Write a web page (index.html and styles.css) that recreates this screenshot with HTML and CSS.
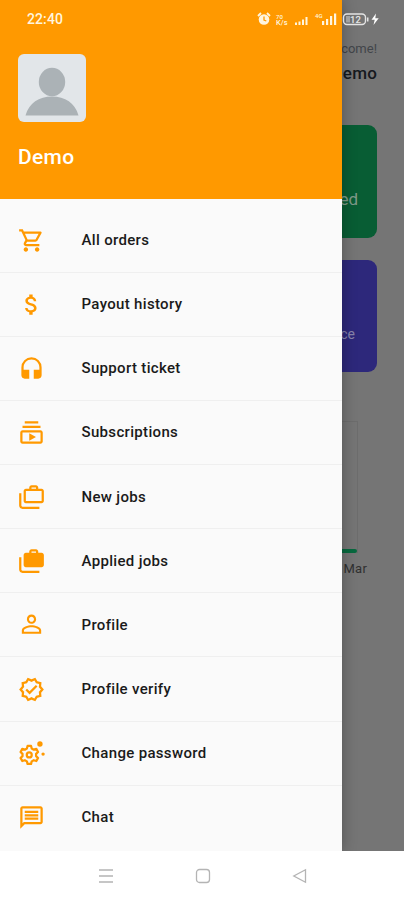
FILE: index.html
```
<!DOCTYPE html>
<html lang="en">
<head>
<meta charset="utf-8">
<meta name="viewport" content="width=device-width, initial-scale=1">
<title>Demo</title>
<link rel="stylesheet" href="styles.css">
</head>
<body>
<div class="phone">
  <main class="dashboard">
    <div class="greeting"><span class="welcome">Welcome!</span><strong class="username">Demo</strong></div>
    <section class="card card-green"><span>Completed</span></section>
    <section class="card card-blue"><span>Balance</span></section>
    <section class="chart"><div class="plot"><i class="bar"></i></div><span class="month">Mar</span></section>
  </main>

  <aside class="drawer">
    <header class="drawer-head">
      <svg class="avatar" viewBox="0 0 68 68"><rect width="68" height="68" rx="6" fill="#e2e6e9"/><ellipse cx="34" cy="28" rx="13.2" ry="14.3" fill="#abb2b6"/><path d="M7.500 61.500C11 49 21 42.500 34 42.500S57 49 60.500 61.500Z" fill="#abb2b6"/></svg>
      <h1>Demo</h1>
    </header>
    <nav class="menu">
      <a class="item"><svg viewBox="0 0 24 24"><path d="M15.550 13c.75 0 1.410-.41 1.750-1.030l3.580-6.490A.996.996 0 0 0 20.010 4H5.210l-.94-2H1v2h2l3.600 7.590-1.350 2.440C4.520 15.370 5.480 17 7 17h12v-2H7l1.100-2h7.450zM6.160 6h12.150l-2.760 5H8.530L6.160 6zM7 18c-1.100 0-1.990.9-1.990 2S5.900 22 7 22s2-.9 2-2-.9-2-2-2zm10 0c-1.100 0-1.990.9-1.990 2s.89 2 1.990 2 2-.9 2-2-.9-2-2-2z"/></svg><span>All orders</span></a>
      <a class="item"><svg viewBox="0 0 24 24"><path d="M11.800 10.900c-2.270-.59-3-1.200-3-2.150 0-1.090 1.010-1.850 2.700-1.850 1.780 0 2.440.85 2.500 2.100h2.210c-.07-1.720-1.120-3.300-3.210-3.810V3h-3v2.160c-1.940.42-3.500 1.680-3.500 3.610 0 2.310 1.910 3.460 4.700 4.130 2.500.6 3 1.480 3 2.410 0 .69-.49 1.790-2.700 1.790-2.060 0-2.870-.92-2.980-2.100h-2.200c.12 2.190 1.760 3.420 3.680 3.830V21h3v-2.150c1.950-.37 3.500-1.500 3.500-3.550 0-2.840-2.430-3.810-4.700-4.400z"/></svg><span>Payout history</span></a>
      <a class="item"><svg viewBox="0 0 24 24"><path d="M12 2a9 9 0 0 0-9 9v7c0 1.660 1.340 3 3 3h4v-8H5v-2c0-3.870 3.130-7 7-7s7 3.130 7 7v2h-5v8h4c1.660 0 3-1.340 3-3v-7a9 9 0 0 0-9-9z"/></svg><span>Support ticket</span></a>
      <a class="item"><svg viewBox="0 0 24 24"><path d="M4 6h16v2H4zm2-4h12v2H6zm14 8H4c-1.100 0-2 .9-2 2v8c0 1.100.9 2 2 2h16c1.100 0 2-.9 2-2v-8c0-1.100-.9-2-2-2zm0 10H4v-8h16v8zm-10-7.270v6.530L16 16z"/></svg><span>Subscriptions</span></a>
      <a class="item"><svg viewBox="0 0 24 24"><path d="M1 9h2v11c0 .55.45 1 1 1h15v2H4c-1.660 0-3-1.340-3-3V9zM18 5V4c0-1.100-.9-2-2-2h-4c-1.100 0-2 .9-2 2v1H7c-1.100 0-2 .9-2 2v9c0 1.100.9 2 2 2h14c1.100 0 2-.9 2-2V7c0-1.100-.9-2-2-2h-3zm-6-1h4v1h-4V4zm9 12H7V7h14v9z"/></svg><span>New jobs</span></a>
      <a class="item"><svg viewBox="0 0 24 24"><path d="M1 9h2v11c0 .55.45 1 1 1h15v2H4c-1.660 0-3-1.340-3-3V9zM18 5V4c0-1.100-.9-2-2-2h-4c-1.100 0-2 .9-2 2v1H7c-1.100 0-2 .9-2 2v9c0 1.100.9 2 2 2h14c1.100 0 2-.9 2-2V7c0-1.100-.9-2-2-2h-3zm-6-1h4v1h-4V4z"/></svg><span>Applied jobs</span></a>
      <a class="item"><svg viewBox="0 0 24 24"><path d="M12 5c1.160 0 2.200 1 2.200 2.300S13.200 9.600 12 9.600 9.800 8.600 9.800 7.300 10.840 5 12 5m0 9.500c2.970 0 6.700 1.460 6.700 2.700v1.200H5.300v-1.200c0-1.240 3.730-2.700 6.700-2.700M12 3.200c-2.300 0-4.100 1.800-4.100 4.100s1.800 4.100 4.100 4.100 4.100-1.800 4.100-4.100-1.800-4.100-4.100-4.100zm0 9.500c-2.900 0-8.600 1.500-8.600 4.500v3h17.200v-3c0-3-5.700-4.500-8.600-4.500z"/></svg><span>Profile</span></a>
      <a class="item"><svg viewBox="0 0 24 24"><path d="M23 12l-2.440-2.790.34-3.690-3.610-.82L15.400 1.500 12 2.960 8.600 1.500 6.710 4.690 3.100 5.500l.34 3.700L1 12l2.440 2.790-.34 3.700 3.610.82L8.600 22.500 12 21.040l3.400 1.460 1.890-3.190 3.610-.82-.34-3.690L23 12zm-4.510 2.110.26 2.790-2.740.62-1.430 2.410L12 18.750l-2.580 1.180-1.430-2.410-2.740-.62.26-2.800L3.660 12l1.850-2.120-.26-2.780 2.740-.61 1.430-2.410L12 5.250l2.580-1.180 1.430 2.410 2.740.62-.26 2.790L20.340 12z"/><path d="m7.300 12 3 3 6.300-6.300" fill="none" stroke="currentColor" stroke-width="2"/></svg><span>Profile verify</span></a>
      <a class="item"><svg viewBox="0 0 24 24"><g fill="none" stroke="currentColor"><path stroke-width="2" stroke-linejoin="round" d="m8.500 5.300 3.100 0 .6 2.300 1.800 1 2.300-.7 1.500 2.700-1.700 1.700v2l1.700 1.700-1.500 2.700-2.300-.7-1.800 1-.6 2.300h-3.100l-.6-2.300-1.800-1-2.300.7L2.300 16l1.700-1.700v-2l-1.700-1.700 1.500-2.700 2.300.7 1.800-1z"/><circle cx="10" cy="13.300" r="2.200" stroke-width="2"/></g><circle cx="19.500" cy="3.500" r="2.400"/><circle cx="22.300" cy="12.500" r="1.500"/></svg><span>Change password</span></a>
      <a class="item"><svg viewBox="0 0 24 24"><path d="M4 4h16v12H5.170L4 17.170V4m0-2c-1.100 0-1.990.9-1.990 2L2 22l4-4h14c1.100 0 2-.9 2-2V4c0-1.100-.9-2-2-2H4zm2 10h12v2H6v-2zm0-3h12v2H6V9zm0-3h12v2H6V6z"/></svg><span>Chat</span></a>
    </nav>
  </aside>

  <div class="status">
    <span class="clock">22:40</span>
    <svg class="indicators" viewBox="0 0 126 18" fill="currentColor">
      <circle cx="7" cy="9.500" r="5.300"/><path d="m1 6 3-3M13 6l-3-3" stroke="currentColor" stroke-width="1.800"/><path d="M7 6.500V10l2.300 1" fill="none" stroke="#ff9900" stroke-width="1.300"/>
      <text x="19" y="8.500" font-size="6">70</text><text x="19" y="15" font-size="7.500">K/s</text>
      <path d="M38 12.500h2V15h-2zM41.500 11.500h2V15h-2zM45 9.500h2V15h-2zM48.500 7h2v8h-2z"/>
      <text x="58" y="8" font-size="6">4G</text>
      <path d="M65 11h2.200v4H65zM69 9h2.200v6H69zM73 6h2.200v9H73zM77 3.500h2.200V15H77z"/>
      <g color="#e4e4e4"><rect x="86.500" y="4" width="22" height="10.500" rx="3.500" fill="none" stroke="currentColor" stroke-width="1.400"/><path fill="currentColor" d="M110 7.500h1.500v4H110z"/>
      <path fill="currentColor" fill-opacity=".45" d="M89 6h4v6.500h-4z"/><text x="93" y="12.800" font-size="9.500" fill="currentColor">12</text></g>
      <path fill="#fff" d="m119 3.500-4.500 6.200h3.200l-1.200 5.300 5.200-6.700h-3.400z"/>
    </svg>
  </div>

  <footer class="system-nav">
    <svg viewBox="0 0 16 16"><path d="M1 2h14M1 8h14M1 14h14"/></svg>
    <svg viewBox="0 0 16 16"><rect x="1.500" y="1.500" width="13" height="13" rx="3"/></svg>
    <svg viewBox="0 0 16 16"><path d="M13.500 1.800v12.400L1.800 8z"/></svg>
  </footer>
</div>
</body>
</html>
```
FILE: styles.css
```
* { box-sizing: border-box; }
body { margin: 0; font-family: Roboto, "Liberation Sans", sans-serif; }
.phone { position: relative; width: 404px; height: 900px; overflow: hidden; display: flex; flex-direction: column; background: #fff; }

.dashboard { flex: 1; background: #757575; padding: 40px 27px 0; }
.greeting { display: flex; flex-direction: column; align-items: flex-end; height: 85px; }
.welcome { font-size: 13px; line-height: 18px; color: #42454a; }
.username { font-size: 17px; line-height: 22px; margin-top: 4px; color: #16191e; font-weight: 500; letter-spacing: .2px; }
.card { height: 113px; border-radius: 9px; display: flex; justify-content: flex-end; color: #7f9a89; }
.card-green { background: #085d34; padding: 63px 19px 0 0; font-size: 17px; line-height: 22px; }
.card-blue { background: #2d287b; margin-top: 22px; height: 112px; padding: 64px 22px 0 0; font-size: 14px; line-height: 20px; color: #8784ab; }
.chart { margin-top: 49px; display: flex; flex-direction: column; align-items: flex-end; }
.plot { width: 300px; height: 132px; margin-right: 19px; border: 1px solid #6d6d6d; border-bottom: 0; display: flex; align-items: flex-end; justify-content: flex-end; }
.bar { width: 30px; height: 4px; background: #08693f; border-radius: 0 2px 2px 0; }
.month { font-size: 13px; line-height: 16px; margin: 8px 10px 0 0; color: #303030; letter-spacing: .2px; }

.drawer { position: absolute; left: 0; top: 0; width: 342px; height: 851px; background: #fafafa; box-shadow: 0 0 14px rgba(0,0,0,.3); overflow: hidden; }
.drawer-head { height: 199px; padding: 54px 18px 0; background: #ff9900; }
.avatar { display: block; width: 68px; height: 68px; }
h1 { margin: 22px 0 0; font-size: 21px; line-height: 26px; font-weight: 500; color: #fff; letter-spacing: .3px; }
.menu { padding-top: 9.500px; }
.item { display: flex; align-items: center; height: 64.15px; padding-left: 18px; border-bottom: 1px solid #efefef; color: #1a1a1a; font-size: 15px; font-weight: 500; letter-spacing: .33px; }
.item:last-child { border-bottom-color: transparent; }
.item svg { width: 27px; height: 27px; margin-right: 36.500px; fill: #ff9900; color: #ff9900; overflow: visible; }

.status { position: absolute; left: 27px; top: 10px; width: 356px; display: flex; justify-content: space-between; align-items: center; color: #fff5df; height: 18px; }
.clock { font-size: 14px; font-weight: 500; letter-spacing: .1px; }
.indicators { width: 126px; height: 18px; font-weight: 500; }

.system-nav { position: relative; height: 49px; display: flex; justify-content: center; align-items: center; gap: 81px; padding-left: 2px; background: #fff; }
.system-nav svg { width: 16px; height: 16px; fill: none; stroke: #b4b4b4; stroke-width: 1.300; }
```
